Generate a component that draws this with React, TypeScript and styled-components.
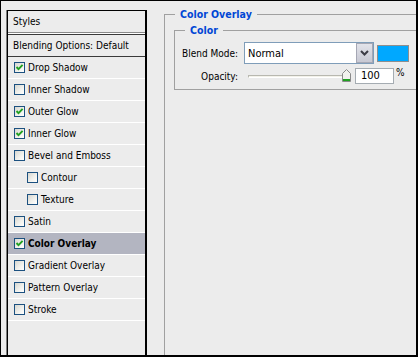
import styled, { createGlobalStyle } from "styled-components";

const GlobalStyle = createGlobalStyle`
  html, body { margin: 0; padding: 0; background: #ececec; }
  body { font-family: "DejaVu Sans Condensed", "DejaVu Sans", "Liberation Sans", sans-serif; font-stretch: condensed; font-size: 10px; color: #000; }
`;

const Frame = styled.div`
  width: 418px;
  height: 357px;
  box-sizing: border-box;
  border-style: solid;
  border-color: #000;
  border-width: 1px 2px 2px 1px;
  background: #ececec;
  display: flex;
  overflow: hidden;
`;

const StylesPanel = styled.div`
  margin: 9px 0 0 6px;
  width: 140px;
  flex: none;
  box-sizing: border-box;
  border-style: solid;
  border-color: #000;
  border-width: 1px 2px 0 1px;
  box-shadow: -1px 0 0 #7c7c7c;
  display: flex;
  flex-direction: column;
`;

const PanelHeader = styled.div`
  height: 21px;
  line-height: 21px;
  padding-left: 5px;
`;

const HeaderRule = styled.div`
  height: 1px;
  border-top: 1px solid #8a8a8a;
  border-bottom: 1px solid #3a3a3a;
  background: #fff;
`;

const BlendRow = styled.div`
  height: 21px;
  line-height: 21px;
  padding-left: 5px;
  border-bottom: 1px solid #3a3a3a;
`;

const EffectRow = styled.div<{ $indent?: boolean; $selected?: boolean }>`
  height: 21px;
  display: flex;
  align-items: center;
  gap: 3px;
  padding-left: ${(p) => (p.$indent ? 19 : 6)}px;
  border-bottom: 1px solid #fff;
  background: ${(p) => (p.$selected ? "#b3b5c1" : "transparent")};
  font-weight: ${(p) => (p.$selected ? "bold" : "normal")};
`;

const Box = styled.span`
  width: 11px;
  height: 11px;
  box-sizing: border-box;
  border: 1px solid #1c5180;
  background: linear-gradient(135deg, #d6d6d0 0%, #f2f2ee 60%, #ffffff 100%);
  display: flex;
  align-items: center;
  justify-content: center;
  flex: none;
`;

const Content = styled.div`
  flex: 1;
  overflow: hidden;
  padding: 7px 0 0 17px;
`;

const GroupBox = styled.fieldset`
  margin: 0;
  padding: 0;
  width: 300px;
  height: 400px;
  border: 1px solid #a0a0a0;
  box-sizing: border-box;
`;

const Legend = styled.legend`
  margin-left: 10px;
  padding: 0 5px;
  line-height: 13px;
  font-weight: bold;
  font-size: 10.5px;
  color: #0046d5;
`;

const InnerGroup = styled.fieldset`
  margin: 3px 0 0 9px;
  padding: 5px 0 5px 3px;
  width: 280px;
  border: 1px solid #a0a0a0;
  box-sizing: border-box;
`;

const InnerLegend = styled(Legend)`
  margin-left: 7px;
`;

const FieldGrid = styled.div`
  display: grid;
  grid-template-columns: 60px auto;
  column-gap: 6px;
  row-gap: 4px;
  align-items: center;
`;

const Label = styled.span`
  text-align: right;
  white-space: nowrap;
`;

const ControlRow = styled.div`
  display: flex;
  align-items: center;
`;

const Select = styled.div`
  width: 130px;
  height: 22px;
  box-sizing: border-box;
  border: 1px solid #7f9db9;
  background: #fff;
  display: flex;
  align-items: center;
  padding-left: 3px;
  font-size: 11px;
`;

const SelectText = styled.span`
  flex: 1;
`;

const DropButton = styled.span`
  width: 17px;
  height: 20px;
  box-sizing: border-box;
  border: 1px solid #a5a7b4;
  background: linear-gradient(#e2e3ea, #c7c8d3);
  display: flex;
  align-items: center;
  justify-content: center;
`;

const Swatch = styled.span<{ $color: string }>`
  margin-left: 3px;
  width: 32px;
  height: 17px;
  box-sizing: border-box;
  border: 1px solid #8e8e8e;
  background: ${(p) => p.$color};
`;

const Slider = styled.div`
  margin-left: 4px;
  width: 103px;
  height: 14px;
  display: flex;
  align-items: center;
  position: relative;
`;

const Track = styled.span`
  width: 100%;
  height: 3px;
  box-sizing: border-box;
  border-top: 1px solid #b8b8b0;
  border-left: 1px solid #b8b8b0;
  border-bottom: 1px solid #fff;
  background: #f3f2ea;
`;

const Thumb = styled.svg`
  position: absolute;
  right: 0;
  top: 0;
`;

const NumberBox = styled.div`
  margin-left: 4px;
  width: 39px;
  height: 16px;
  box-sizing: border-box;
  border: 1px solid #a5acb2;
  background: #fff;
  padding-left: 5px;
  line-height: 14px;
  font-size: 11px;
`;

const Unit = styled.span`
  margin-left: 2px;
  align-self: flex-start;
  margin-top: -1px;
`;

const Check = () => (
  <svg width="9" height="9" viewBox="0 0 9 9">
    <path d="M1.5 4 L3.5 6.2 L7.6 1.8" fill="none" stroke="#21a121" strokeWidth="1.9" />
  </svg>
);

const effects = [
  { name: "Drop Shadow", checked: true },
  { name: "Inner Shadow" },
  { name: "Outer Glow", checked: true },
  { name: "Inner Glow", checked: true },
  { name: "Bevel and Emboss" },
  { name: "Contour", indent: true },
  { name: "Texture", indent: true },
  { name: "Satin" },
  { name: "Color Overlay", checked: true, selected: true },
  { name: "Gradient Overlay" },
  { name: "Pattern Overlay" },
  { name: "Stroke" },
];

export default function App() {
  return (
    <>
      <GlobalStyle />
      <Frame>
        <StylesPanel>
          <PanelHeader>Styles</PanelHeader>
          <HeaderRule />
          <BlendRow>Blending Options: Default</BlendRow>
          {effects.map((e) => (
            <EffectRow key={e.name} $indent={e.indent} $selected={e.selected}>
              <Box>{e.checked && <Check />}</Box>
              {e.name}
            </EffectRow>
          ))}
        </StylesPanel>
        <Content>
          <GroupBox>
            <Legend>Color Overlay</Legend>
            <InnerGroup>
              <InnerLegend>Color</InnerLegend>
              <FieldGrid>
                <Label>Blend Mode:</Label>
                <ControlRow>
                  <Select>
                    <SelectText>Normal</SelectText>
                    <DropButton>
                      <svg width="9" height="6" viewBox="0 0 9 6">
                        <path d="M1 1 L4.5 4.5 L8 1" fill="none" stroke="#3c3c46" strokeWidth="2" />
                      </svg>
                    </DropButton>
                  </Select>
                  <Swatch $color="#00a8ff" />
                </ControlRow>
                <Label>Opacity:</Label>
                <ControlRow>
                  <Slider>
                    <Track />
                    <Thumb width="9" height="13" viewBox="0 0 9 13">
                      <path d="M0.5 4.5 L4.5 0.5 L8.5 4.5 L8.5 12.5 L0.5 12.5 Z" fill="#f2f2ee" stroke="#8a8a8a" />
                      <rect x="1" y="10" width="7" height="2" fill="#21a121" />
                    </Thumb>
                  </Slider>
                  <NumberBox>100</NumberBox>
                  <Unit>%</Unit>
                </ControlRow>
              </FieldGrid>
            </InnerGroup>
          </GroupBox>
        </Content>
      </Frame>
    </>
  );
}
